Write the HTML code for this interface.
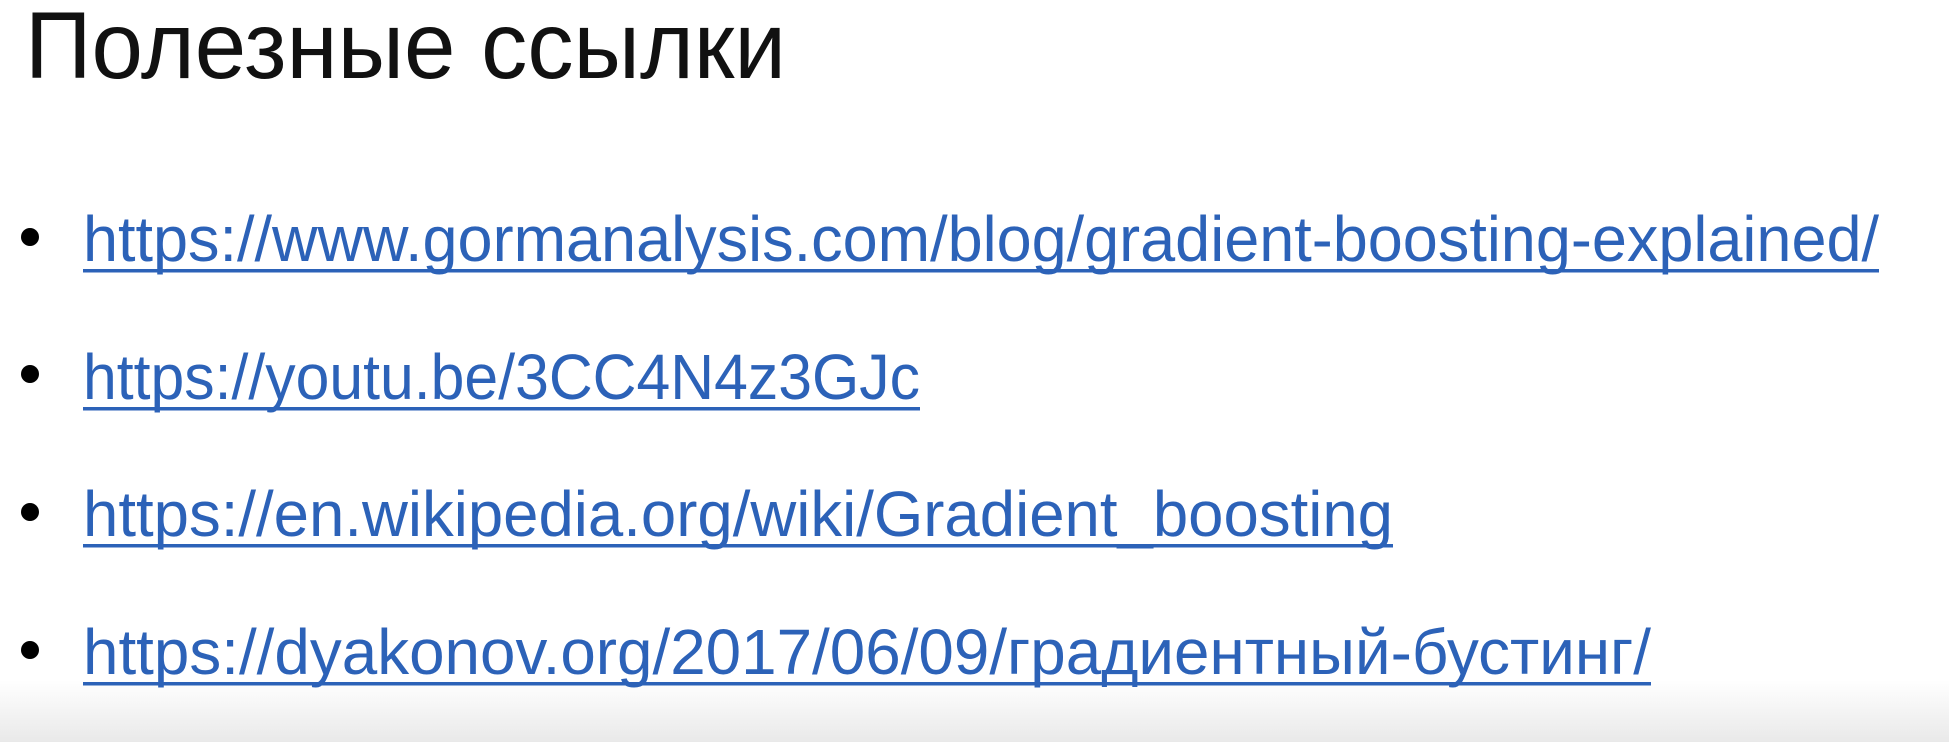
<!DOCTYPE html>
<html><head><meta charset="utf-8"><style>
html,body{margin:0;padding:0;width:1949px;height:742px;overflow:hidden;background:#fff}
svg{display:block}
</style></head><body>
<svg width="1949" height="742" xmlns="http://www.w3.org/2000/svg">
<defs><linearGradient id="g" x1="0" y1="0" x2="0" y2="1">
<stop offset="0" stop-color="#ffffff"/><stop offset="1" stop-color="#e9e9e9"/></linearGradient></defs>
<rect x="0" y="0" width="1949" height="742" fill="#fff"/>
<rect x="0" y="680" width="1949" height="62" fill="url(#g)"/>
<text x="25" y="78" font-family="Liberation Sans, sans-serif" font-size="95" fill="#111" textLength="761" lengthAdjust="spacingAndGlyphs">Полезные ссылки</text>
<g fill="#000">
<circle cx="30" cy="237" r="9"/><circle cx="30" cy="374" r="9"/><circle cx="30" cy="512" r="9"/><circle cx="30" cy="650" r="9"/>
</g>
<g font-family="Liberation Sans, sans-serif" font-size="64" fill="#2c62b8">
<text x="83" y="261" textLength="1796" lengthAdjust="spacingAndGlyphs">https://www.gormanalysis.com/blog/gradient-boosting-explained/</text>
<text x="83" y="399" textLength="837" lengthAdjust="spacingAndGlyphs">https://youtu.be/3CC4N4z3GJc</text>
<text x="83" y="536" textLength="1310" lengthAdjust="spacingAndGlyphs">https://en.wikipedia.org/wiki/Gradient_boosting</text>
<text x="83" y="674" textLength="1568" lengthAdjust="spacingAndGlyphs">https://dyakonov.org/2017/06/09/градиентный-бустинг/</text>
</g>
<g fill="#2c62b8">
<rect x="83" y="269" width="1796" height="3.5"/>
<rect x="83" y="407" width="837" height="3.5"/>
<rect x="83" y="544" width="1310" height="3.5"/>
<rect x="83" y="682" width="1568" height="3.5"/>
</g>
</svg>
</body></html>
